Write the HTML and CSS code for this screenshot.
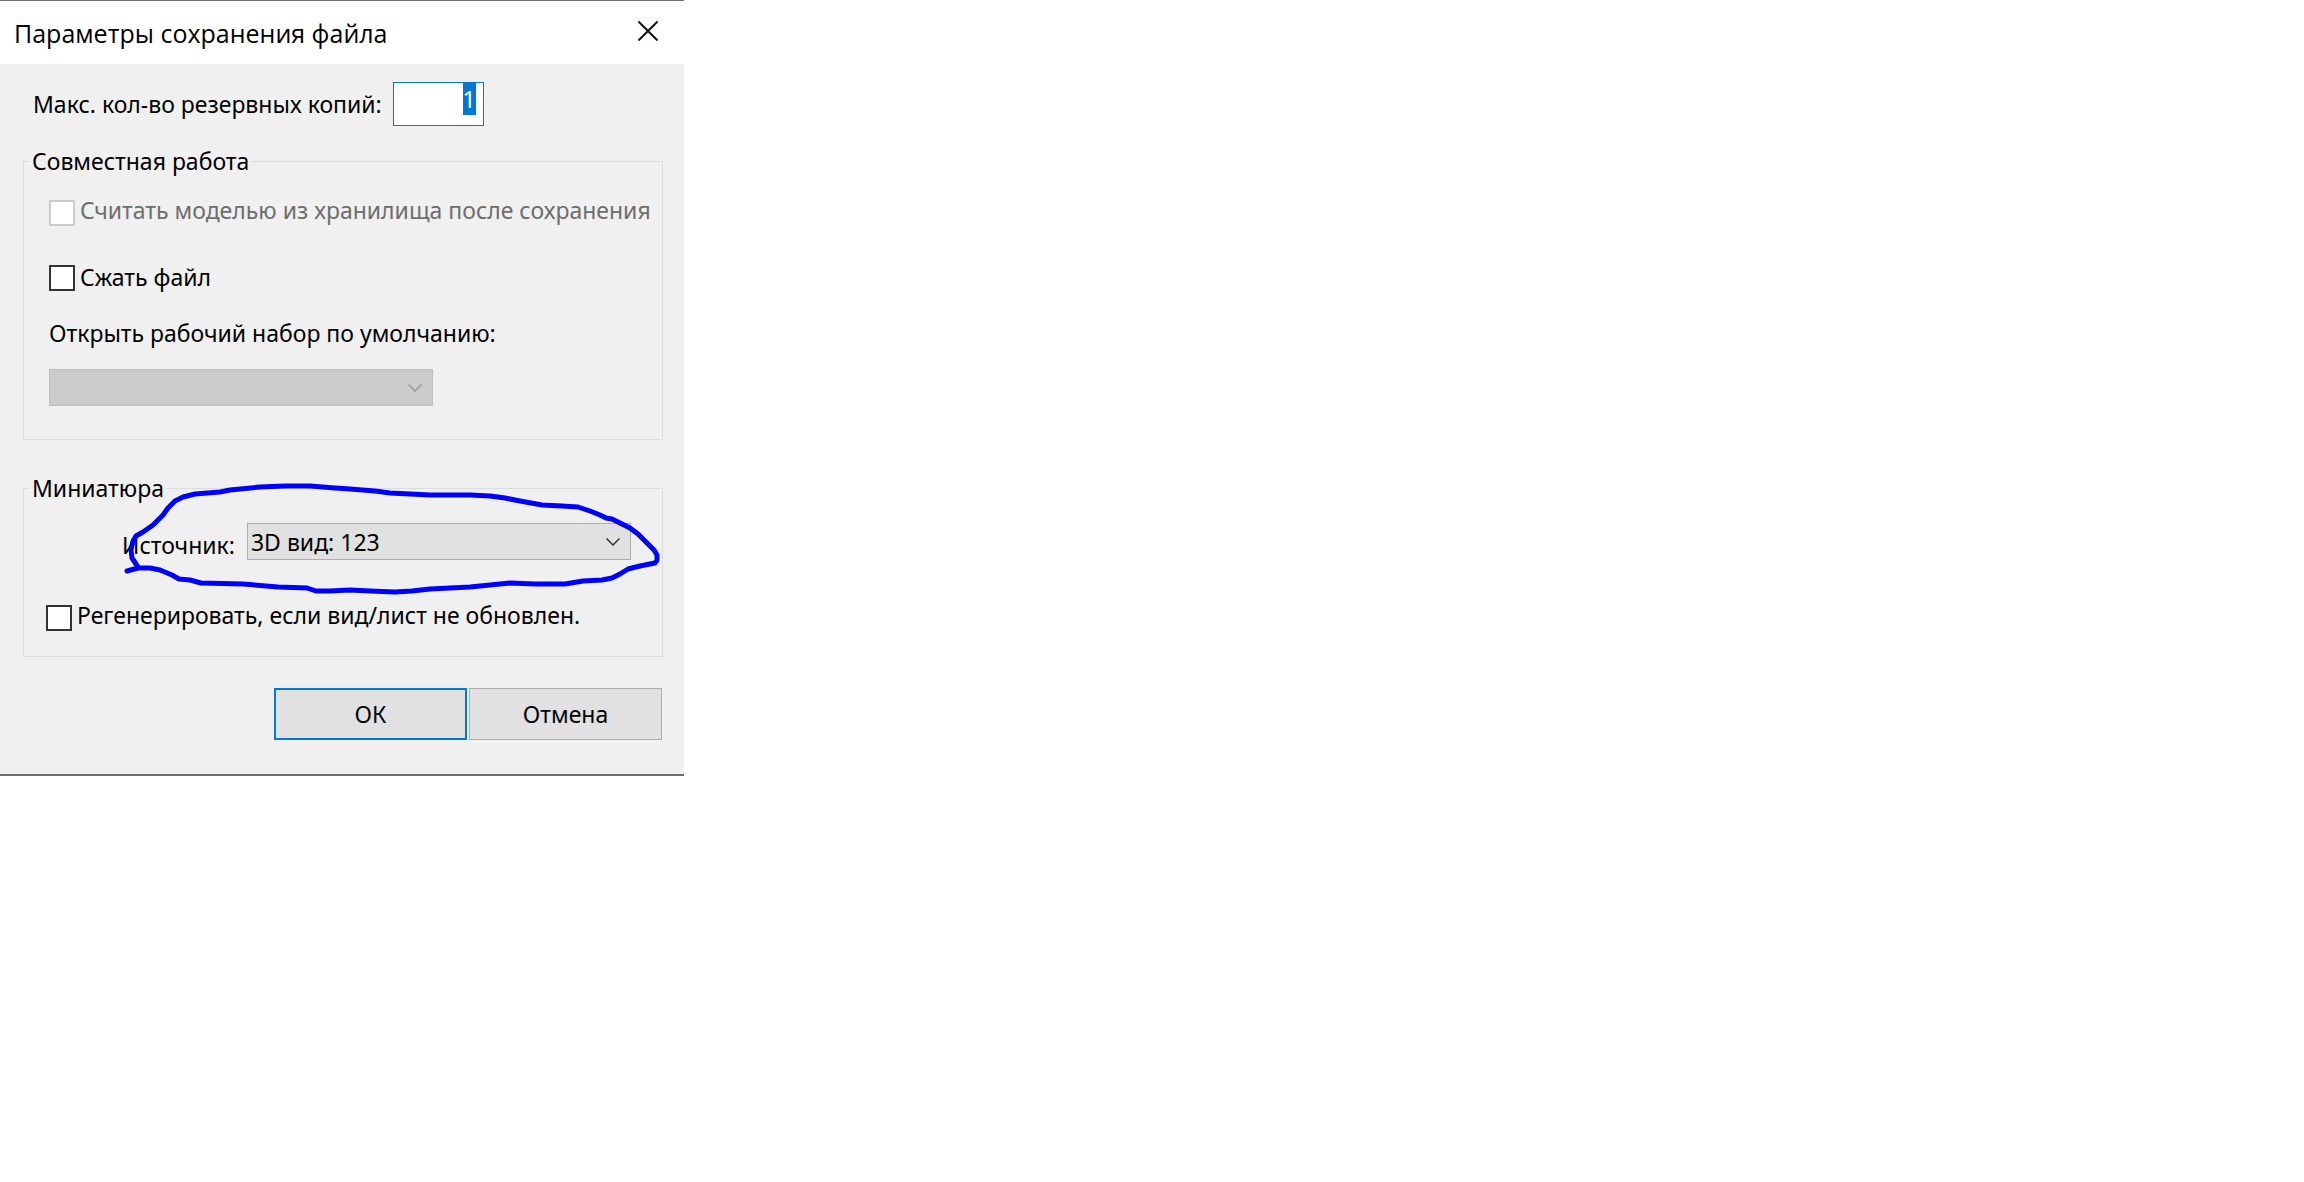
FILE: index.html
```html
<!DOCTYPE html>
<html lang="ru">
<head>
  <meta charset="UTF-8">
  <meta name="viewport" content="width=device-width, initial-scale=1.0">
  <title>Параметры сохранения файла</title>
  <link rel="stylesheet" href="styles.css">
</head>
<body>

  <main class="dialog">
    <header>
      <h1>Параметры сохранения файла</h1>
      <button class="close" type="button" aria-label="Закрыть">
        <svg width="20" height="20" viewBox="0 0 20 20"><path d="M0.5 0.5L19.5 19.5M19.5 0.5L0.5 19.5"/></svg>
      </button>
    </header>

    <form>
      <div class="backups">
        <label for="backups">Макс. кол-во резервных копий:</label>
        <input type="text" id="backups" value="1">
      </div>

      <fieldset class="sharing">
        <legend>Совместная работа</legend>
        <div class="check disabled">
          <input type="checkbox" id="central" disabled>
          <label for="central">Считать моделью из хранилища после сохранения</label>
        </div>
        <div class="check compact">
          <input type="checkbox" id="compact">
          <label for="compact">Сжать файл</label>
        </div>
        <label class="worksetLabel" for="workset">Открыть рабочий набор по умолчанию:</label>
        <div class="select">
          <select id="workset" disabled></select>
          <svg width="14" height="8" viewBox="0 0 14 8"><path d="M0.5 0.5L7 7L13.5 0.5" stroke-width="1.5"/></svg>
        </div>
      </fieldset>

      <fieldset class="preview">
        <legend>Миниатюра</legend>
        <div class="source">
          <label for="source">Источник:</label>
          <div class="select">
            <select id="source">
              <option>3D вид: 123</option>
            </select>
            <svg width="14" height="8" viewBox="0 0 14 8"><path d="M0.5 0.5L7 7L13.5 0.5" stroke-width="1.5"/></svg>
          </div>
        </div>
        <div class="check">
          <input type="checkbox" id="regenerate">
          <label for="regenerate">Регенерировать, если вид/лист не обновлен.</label>
        </div>
        <!-- hand drawn mark around the source -->
        <svg class="mark" width="545" height="120" viewBox="120 480 545 120">
          <polyline points="127,571 138,568 150,568 160,570 172,575 179,579 190,580 201,583 243,584 278,587 307,588 316,591 330,591 350,590 370,591 395,592 412,591 430,589 470,587 510,583 535,584 565,584 583,581 602,580 612,578 620,574 628,569 640,566 655,563 657,560 657,555 654,550 645,541 638,534 630,528 620,523 612,519 606,518 600,515 590,511 578,507 562,506 542,505 520,501 505,498 490,496 470,495 430,495 390,493 375,491 350,489 335,488 310,486 285,486 260,487 230,490 220,492 195,494 183,497 175,501 168,508 163,515 153,525 143,532 136,536 133,541 131,550 132,558 138,567"/>
        </svg>
      </fieldset>

      <div class="buttons">
        <button type="button" class="ok">ОК</button>
        <button type="button">Отмена</button>
      </div>
    </form>
  </main>

  <script>
    document.getElementById("backups").select();
  </script>
</body>
</html>
```
FILE: styles.css
```css
* {
  box-sizing: border-box;
}

body {
  margin: 0;
  background-color: #fff;
  color: #000;
  font-family: "Noto Sans", Tahoma, sans-serif;
  font-size: 23px;
  line-height: 30px;
}

.dialog {
  max-width: 684px;
  background-color: #f0f0f0;
  border-top: 1px solid #6e6c6c;
  border-bottom: 2px solid #6e6c6c;
  box-shadow: 0 2px 0 #c8c8c8;
}

header {
  display: flex;
  justify-content: space-between;
  align-items: center;
  height: 63px;
  padding: 0 24px 0 14px;
  background-color: #fff;
}

h1 {
  margin: 0;
  font-family: "Open Sans", "Segoe UI", sans-serif;
  font-size: 25px;
  font-weight: normal;
}

button,
input,
select {
  margin: 0;
  font: inherit;
  color: inherit;
}

.close {
  display: flex;
  padding: 0 2px 4px;
  border: none;
  background: none;
}

.close svg {
  fill: none;
  stroke: #111;
  stroke-width: 2px;
}

form {
  padding: 18px 21px 34px 23px;
}

.backups {
  display: flex;
  align-items: center;
  gap: 11px;
  padding-left: 10px;
}

.backups input {
  width: 91px;
  height: 44px;
  padding: 0 7px 10px;
  border: 1px solid #0078d7;
  outline: none;
  background-color: #fff;
  text-align: right;
}

.backups input::selection {
  background-color: #0078d7;
  color: #fff;
}

fieldset {
  position: relative;
  min-width: 0;
  margin: 0;
  border: 1px solid #dcdcdc;
}

legend {
  padding: 0 2px;
}

.sharing {
  margin-top: 20px;
  padding: 19px 8px 33px 25px;
}

.preview {
  margin-top: 33px;
  padding: 20px 8px 25px 22px;
}

.sharing legend {
  margin-left: -19px;
}

.preview legend {
  margin-left: -16px;
}

.check {
  display: flex;
  align-items: flex-end;
  gap: 5px;
  white-space: nowrap;
}

.check label {
  padding-bottom: 1px;
}

.check input {
  appearance: none;
  flex: none;
  width: 26px;
  height: 26px;
  border: 2px solid #333;
  background-color: #fff;
}

.disabled {
  color: #6d6d6d;
}

.disabled input {
  border-color: #ccc;
}

.compact {
  align-items: center;
  margin: 36px 0 25px;
}

.worksetLabel {
  display: block;
  margin-bottom: 21px;
}

.select {
  position: relative;
  width: 384px;
}

.select select {
  appearance: none;
  display: block;
  width: 100%;
  height: 37px;
  padding: 0 40px 0 3px;
  border: 1px solid #adadad;
  border-radius: 0;
  background-color: #e1e1e1;
}

.select svg {
  position: absolute;
  top: 15px;
  right: 11px;
  fill: none;
  stroke: #333;
}

.select select:disabled {
  border-color: #bfbfbf;
  background-color: #ccc;
  opacity: 1;
}

.select select:disabled + svg {
  stroke: #999;
}

.source {
  display: flex;
  align-items: flex-end;
  gap: 12px;
  margin-bottom: 40px;
  padding-left: 76px;
}

.mark {
  position: absolute;
  top: -23px;
  left: 96px;
  fill: none;
  stroke: #00f;
  stroke-width: 5px;
  stroke-linecap: round;
  stroke-linejoin: round;
  pointer-events: none;
}

.buttons {
  display: flex;
  justify-content: flex-end;
  gap: 2px;
  margin: 31px 1px 0 0;
}

.buttons button {
  width: 193px;
  height: 52px;
  border: 1px solid #adadad;
  background-color: #e1e1e1;
}

.buttons .ok {
  border: 2px solid #0078d7;
}
```
